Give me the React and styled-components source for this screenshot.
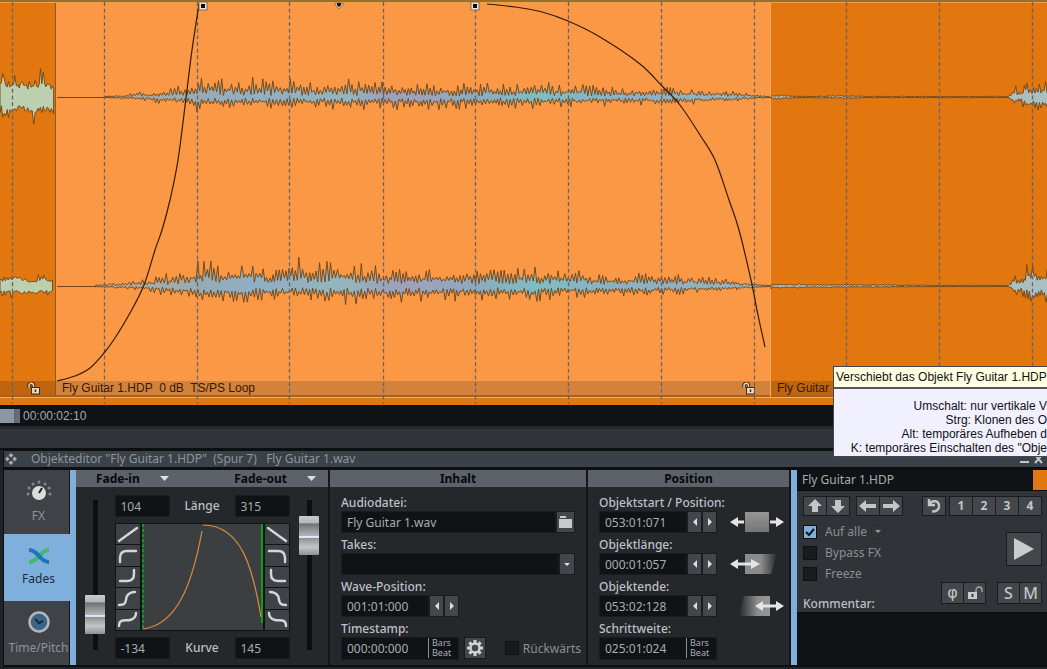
import React from "react";
import styled, { createGlobalStyle, css } from "styled-components";

const GlobalStyle = createGlobalStyle`
    *{
        box-sizing: border-box;
    }
    body{
        margin: 0;
        background: #1f2226;
        font-family: "Noto Sans", "Open Sans", sans-serif;
        font-size: 12px;
        color: #a9acaf;
        overflow-x: hidden;
    }
    button, input, select, textarea{
        font: inherit;
        color: inherit;
        margin: 0;
        padding: 0;
        border: none;
        border-radius: 0;
    }
    svg{
        display: block;
    }
`;

// Wave form helpers

const noise = (seed) => {
  let s = seed * 7919;
  return () => {
    s = (s * 16807) % 2147483647;
    return s / 2147483647;
  };
};

const levelAt = (points, x) => {
  for (let i = 1; i < points.length; i++) {
    if (x <= points[i][0]) {
      const [x0, y0] = points[i - 1];
      const [x1, y1] = points[i];
      return y0 + ((y1 - y0) * (x - x0)) / (x1 - x0);
    }
  }
  return points[points.length - 1][1];
};

const wavePath = ({ mid, up, down, seed, body = 0.08, step = 1.7 }) => {
  const rand = noise(seed);
  const tall = () => (rand() < 0.22 ? 0.85 + 0.25 * rand() : 0.4 + 0.4 * rand());
  const low = () => body + 0.28 * rand();
  const start = up[0][0];
  const end = up[up.length - 1][0];
  const top = [];
  const bottom = [];
  for (let x = start, i = 0; x <= end; x += step * (0.8 + 0.4 * rand()), i++) {
    const peak = i % 2 ? tall() : low();
    const dip = i % 2 ? low() : tall();
    top.push(`${x.toFixed(1)} ${(mid - levelAt(up, x) * peak).toFixed(1)}`);
    bottom.unshift(`${x.toFixed(1)} ${(mid + levelAt(down, x) * dip).toFixed(1)}`);
  }
  return `M${top.concat(bottom).join("L")}Z`;
};

const smooth = (p) => {
  let d = `M${p[0][0]} ${p[0][1]}`;
  for (let i = 0; i < p.length - 1; i++) {
    const a = p[i - 1] || p[i];
    const b = p[i];
    const c = p[i + 1];
    const e = p[i + 2] || c;
    d += `C${b[0] + (c[0] - a[0]) / 6} ${b[1] + (c[1] - a[1]) / 6} ${c[0] - (e[0] - b[0]) / 6} ${c[1] - (e[1] - b[1]) / 6} ${c[0]} ${c[1]}`;
  }
  return d;
};

const beats = [12, 104, 197, 289, 383, 475, 568, 661, 754, 846, 939, 1032];

const fadeIn = [[57, 381], [75, 376], [90, 368], [104, 353], [115, 338], [130, 313], [144, 285], [155, 250], [162, 230], [170, 200], [178, 160], [186, 98], [192, 50], [199, 4]];
const fadeOut = [[487, 4], [515, 7], [542, 12], [568, 21], [600, 37], [640, 64], [662, 86], [680, 105], [700, 135], [715, 160], [729, 200], [739, 230], [751, 280], [758, 315], [765, 347]];

const waves = [
  {
    fill: "#bccfae", mid: 97, seed: 11, body: 0.45, step: 1.4,
    up: [[0, 20], [3, 36], [6, 22], [12, 26], [18, 16], [22, 28], [28, 14], [36, 16], [41, 30], [46, 18], [54, 20]],
    down: [[0, 18], [8, 26], [14, 26], [20, 16], [33, 26], [40, 16], [54, 24]],
  },
  {
    fill: "#bccfae", mid: 286, seed: 23, body: 0.4, step: 1.4,
    up: [[0, 11], [12, 13], [22, 13], [30, 9], [41, 12], [54, 9]],
    down: [[0, 9], [14, 12], [33, 11], [54, 9]],
  },
  {
    fill: "url(#spectrum)", mid: 97, seed: 37,
    up: [[104, 1], [125, 2], [140, 6], [150, 4], [165, 8], [185, 12], [195, 16], [205, 21], [220, 17], [237, 18], [254, 20], [270, 17], [297, 21], [310, 15], [336, 17], [369, 17], [390, 13], [430, 12], [460, 13], [500, 13], [537, 14], [578, 14], [600, 10], [640, 9], [680, 9], [710, 7], [740, 5], [755, 2], [770, 1]],
    down: [[104, 1], [140, 3], [165, 7], [185, 9], [200, 15], [215, 12], [260, 12], [300, 11], [347, 13], [390, 12], [430, 12], [480, 11], [530, 12], [570, 10], [620, 9], [660, 9], [700, 7], [740, 4], [755, 2], [770, 1]],
  },
  {
    fill: "url(#spectrum)", mid: 286, seed: 51, body: 0.12,
    up: [[95, 1], [125, 4], [150, 7], [165, 11], [185, 19], [195, 22], [205, 26], [220, 20], [237, 22], [254, 26], [270, 20], [297, 28], [310, 20], [336, 24], [353, 22], [369, 22], [390, 16], [430, 16], [460, 17], [500, 16], [537, 18], [578, 17], [600, 12], [640, 12], [680, 12], [710, 9], [740, 5], [755, 3], [770, 1]],
    down: [[95, 1], [140, 4], [165, 9], [185, 12], [200, 19], [215, 16], [260, 15], [300, 14], [347, 18], [390, 16], [430, 15], [480, 13], [530, 15], [570, 12], [620, 10], [660, 10], [700, 7], [740, 4], [755, 2], [770, 1]],
  },
  {
    fill: "#a9bfc0", mid: 97, seed: 67, body: 0.2, step: 1.5,
    up: [[771, 2], [776, 3], [800, 1], [846, 2], [870, 1], [1008, 1], [1012, 5], [1015, 11], [1020, 6], [1028, 19], [1032, 15], [1038, 20], [1042, 14], [1050, 18]],
    down: [[771, 2], [776, 3], [800, 1], [846, 2], [870, 1], [1008, 1], [1012, 5], [1015, 12], [1020, 6], [1028, 16], [1038, 17], [1050, 12]],
  },
  {
    fill: "#a9bfc0", mid: 286, seed: 79, body: 0.2, step: 1.5,
    up: [[771, 3], [830, 2], [870, 2], [930, 1], [1008, 1], [1012, 5], [1015, 14], [1020, 8], [1028, 24], [1032, 18], [1038, 25], [1042, 18], [1050, 20]],
    down: [[771, 3], [830, 2], [870, 2], [930, 1], [1008, 1], [1012, 5], [1015, 15], [1020, 8], [1028, 20], [1038, 21], [1050, 15]],
  },
];

// Arranger

const Page = styled.main`
    position: relative;
    min-height: 100vh;
    display: flex;
    flex-direction: column;
    overflow: hidden;
`;

const Arranger = styled.section`
    position: relative;
    height: 405px;
    display: flex;
    flex-direction: column;
    padding-bottom: 7px;
    background: #e1770e;
    border-top: 2px solid #98702c;
    font-family: "Liberation Sans", Arial, sans-serif;
`;

const Lane = styled.div`
    flex: 1;
    display: flex;
    border-top: 1px solid #f0a040;
    border-bottom: 1px solid #f5ad5c;
`;

const Clip = styled.article`
    display: flex;
    flex-direction: column;
    justify-content: flex-end;
    flex: ${(props) => (props.$width ? `0 0 ${props.$width}px` : "1")};
    background: ${(props) => (props.$selected ? "#fb9845" : "#e1770e")};
    border-right: ${(props) => (props.$width ? "1px solid" : "none")};
    border-color: ${(props) => (props.$selected ? "#fcab52" : "#8c5c1d")};
`;

const ClipBar = styled.footer`
    height: 16px;
    display: flex;
    align-items: center;
    justify-content: space-between;
    padding: 0 14px 0 6px;
    border-bottom: 2px solid #a5611f;
    background: ${(props) => (props.$selected ? "#d3823c" : "#be650e")};
    color: #33190a;
    white-space: pre;
    overflow: hidden;
    span{
        position: relative;
        z-index: 1;
    }
    svg{
        margin-left: auto;
    }
`;

const Drawing = styled.svg`
    position: absolute;
    top: -2px;
    left: 0;
    width: 100%;
    height: 405px;
    pointer-events: none;
`;

const Scrub = styled.div`
    height: 21px;
    display: flex;
    align-items: center;
    gap: 3px;
    background: #101316;
    font-family: "Liberation Sans", Arial, sans-serif;
    color: #a5a8aa;
    i{
        width: 20px;
        height: 14px;
        background: #8d96a5;
        border-right: 6px solid #646c78;
    }
`;

const Divider = styled.div`
    height: 22px;
    background: #303337;
    border-top: 3px solid #23262b;
`;

// Tooltip

const Tooltip = styled.aside`
    position: absolute;
    z-index: 2;
    top: 366px;
    left: 833px;
    right: 0;
    border: 1px solid #45454f;
    border-right: none;
    background: #f0f0ff;
    color: #111;
    font-family: "Liberation Sans", Arial, sans-serif;
    white-space: nowrap;
    overflow: hidden;
    h2{
        margin: 0;
        height: 22px;
        padding-left: 2px;
        background: #ffffe1;
        border-bottom: 2px solid #55555a;
        font-size: 12px;
        font-weight: normal;
        line-height: 20px;
    }
    p{
        margin: 0;
        text-align: right;
        line-height: 14px;
    }
`;

const TooltipBody = styled.div`
    padding: 10px 0 1px;
`;

// Object editor

const Editor = styled.section`
    border-top: 2px solid #0c0e10;
    padding-left: 3px;
`;

const TitleBar = styled.header`
    height: 20px;
    display: flex;
    align-items: center;
    gap: 14px;
    padding: 0 4px 0 1px;
    background: #3a4148;
    border: 1px solid #0c0e10;
    border-right: none;
    border-bottom-width: 3px;
    color: #8f959b;
    white-space: pre;
    h1{
        flex: 1;
        margin: 0;
        font-size: 12px;
        font-weight: normal;
        line-height: 16px;
    }
`;

const Panels = styled.div`
    display: grid;
    grid-template-columns: 72px 254fr 258fr 203fr 256fr;
    height: 197px;
    border-left: 1px solid #0c0e10;
    border-bottom: 2px solid #0c0e10;
`;

const Tabs = styled.nav`
    display: flex;
    flex-direction: column;
    gap: 1px;
    padding-right: 6px;
    background: #7fb0dc;
`;

const Tab = styled.button`
    flex: 1 1 0;
    min-height: 0;
    display: flex;
    flex-direction: column;
    align-items: center;
    justify-content: center;
    gap: 6px;
    padding-left: 4px;
    overflow: hidden;
    white-space: nowrap;
    background: ${(props) => (props.$active ? "#7fb0dc" : "#3f4347")};
    color: ${(props) => (props.$active ? "#1b2b3c" : "#8f9398")};
    border-right: 1px solid ${(props) => (props.$active ? "#7fb0dc" : "#14171a")};
    line-height: 16px;
`;

const Panel = styled.section`
    min-width: 0;
    background: #25282b;
    border-right: 2px solid #14171a;
`;

const Band = styled.h2`
    display: flex;
    justify-content: ${(props) => (props.$split ? "space-between" : "center")};
    align-items: center;
    height: 17px;
    margin: 0;
    padding: ${(props) => (props.$split ? "0 12px 0 20px" : "0")};
    background: #5c616a;
    color: #07090b;
    font-size: 12px;
    font-weight: 700;
    span{
        display: flex;
        align-items: center;
        gap: 20px;
    }
`;

const FadeBody = styled.div`
    display: flex;
    justify-content: space-between;
    padding: 8px 9px 0;
`;

const Fader = styled.input`
    appearance: none;
    writing-mode: vertical-lr;
    direction: rtl;
    width: 20px;
    height: 150px;
    margin-top: 5px;
    background: linear-gradient(#0c0e10, #0c0e10) center / 5px 100% no-repeat;
    &::-webkit-slider-thumb{
        appearance: none;
        width: 20px;
        height: 39px;
        border-radius: 1px;
        background: linear-gradient(#c9cbcd 0, #b4b6b8 18%, #6f7275 20%, #b0b2b4 50%, #dfe8ff 51%, #dfe8ff 55%, #8f9193 57%, #b9bbbd 75%, #c2c4c6 80%, #8f9193 100%);
    }
`;

const FadeCenter = styled.div`
    display: flex;
    flex-direction: column;
    gap: 6px;
    width: 175px;
`;

const ValueRow = styled.div`
    display: flex;
    align-items: center;
    justify-content: space-between;
`;

const CurveBox = styled.div`
    display: flex;
    height: 108px;
    border: 1px solid #111417;
`;

const CurveButtons = styled.div`
    width: 26px;
    display: grid;
    gap: 1px;
    background: #111417;
    border: solid #111417;
    border-width: ${(props) => (props.$right ? "0 0 0 2px" : "0 2px 0 0")};
    button{
        display: grid;
        place-items: center;
        min-height: 0;
        background: #3f4246;
    }
`;

const Graph = styled.svg`
    flex: 1;
    min-width: 0;
    height: 100%;
    background: #3c3f41;
`;

const Label = styled.label`
    display: block;
    color: #bfbfc8;
    font-weight: 500;
    line-height: 16px;
    white-space: nowrap;
`;

const Input = styled.input`
    width: ${(props) => (props.$width ? `${props.$width}px` : "100%")};
    height: 22px;
    padding-left: 5px;
    background: #101316;
    border: 1px solid #1a1d20;
    outline: none;
`;

const FieldList = styled.div`
    display: grid;
    gap: 4px;
    padding: 8px 11px 0;
`;

const FieldRow = styled.div`
    display: flex;
    align-items: center;
    height: 22px;
    > svg, > label{
        margin-right: -6px;
    }
`;

const Select = styled.select`
    appearance: none;
    flex: 1;
    height: 22px;
    background: #101316;
    border: 1px solid #1a1d20;
`;

const cell = css`
    display: grid;
    place-items: center;
    background: #43464a;
    color: #c6c8ca;
    border: 1px solid #191c1f;
`;

const Step = styled.button`
    ${cell}
    flex: none;
    width: ${(props) => props.$width || 15}px;
    height: 22px;
    margin-left: ${(props) => props.$gap || 0}px;
`;

const Caret = styled.span`
    ${cell}
    width: 16px;
    height: 22px;
`;

const BeatField = styled.div`
    display: flex;
    align-items: center;
    width: 118px;
    height: 23px;
    flex: none;
    background: #101316;
    border: 1px solid #1a1d20;
`;

const BeatInput = styled(Input)`
    height: 20px;
    background: none;
    border: none;
    padding-left: 5px;
`;

const Unit = styled.span`
    padding-left: 3px;
    border-left: 1px solid #8b8e91;
    font-size: 9px;
    line-height: 10px;
    span{
        display: block;
        height: 10px;
    }
`;

const Check = styled.label`
    display: flex;
    align-items: center;
    gap: ${(props) => props.$gap || 4}px;
    height: 21px;
    color: #8b8f93;
    white-space: nowrap;
    input{
        appearance: none;
        flex: none;
        width: 14px;
        height: 14px;
        background: #191c1f;
        border: 1px solid #0e1012;
    }
    input:checked{
        background: #7fb0dc url("data:image/svg+xml,%3Csvg xmlns='http://www.w3.org/2000/svg' viewBox='0 0 12 12'%3E%3Cpath d='M2 6l3 3 5-6' fill='none' stroke='%23101316' stroke-width='2'/%3E%3C/svg%3E");
    }
`;

const Spacer = styled.div`
    flex: ${(props) => props.$grow || 1};
`;

const ObjectPanel = styled.section`
    display: flex;
    flex-direction: column;
    min-width: 0;
    background: #303337;
    border-left: 6px solid #7fb0dc;
`;

const ObjectName = styled.h2`
    display: flex;
    justify-content: space-between;
    margin: 0;
    padding-left: 5px;
    height: 21px;
    flex: none;
    background: #101316;
    border-bottom: 1px solid #0a0c0e;
    font-size: 12px;
    font-weight: normal;
    line-height: 20px;
    i{
        width: 14px;
        background: #e1770e;
    }
`;

const ToolRow = styled.div`
    display: flex;
    gap: ${(props) => props.$gap || 0}px;
    padding: ${(props) => (props.$padded ? "5px 5px 5px 6px" : "0")};
`;

const Group = styled.div`
    display: flex;
    background: #191c1f;
    border: 1px solid #191c1f;
    gap: 1px;
`;

const Tool = styled.button`
    display: grid;
    place-items: center;
    width: ${(props) => (props.$big ? 34 : props.$wide ? 21 : 22)}px;
    height: ${(props) => (props.$big ? 32 : props.$wide ? 20 : 18)}px;
    background: #43464a;
    color: #c3c5c7;
    font-size: ${(props) => (props.$wide ? 16 : 12)}px;
    font-weight: ${(props) => (props.$wide ? 500 : 700)};
    line-height: 18px;
`;

const PhaseTool = styled(Tool)`
    font-family: "DejaVu Sans", sans-serif;
`;

const Dropdown = styled.button`
    align-self: center;
    display: grid;
    place-items: center;
    width: 14px;
    height: 14px;
    background: #303337;
    border: 1px solid #26292c;
    opacity: 0.6;
`;

const Options = styled.div`
    display: flex;
    justify-content: space-between;
    height: 91px;
    padding: 0 5px 0 6px;
`;

const Checks = styled.div`
    display: flex;
    flex-direction: column;
    > label:last-child{
        margin-top: auto;
    }
`;

const Actions = styled.div`
    display: flex;
    flex-direction: column;
    align-items: flex-end;
    justify-content: space-between;
    padding: 11px 0 8px;
`;

const Comment = styled.textarea`
    flex: 1;
    min-height: 0;
    resize: none;
    outline: none;
    background: #101316;
    border-top: 1px solid #0a0c0e;
`;

// Icons

const Lock = () => (
  <svg width="14" height="13" viewBox="0 0 14 13" fill="none">
    <path d="M2 6V3.5a2 2 0 0 1 4.500 0V7" stroke="#4a2a0c" strokeWidth="3.400" />
    <path d="M2 6V3.500a2 2 0 0 1 4.500 0V7" stroke="#e8d8c4" strokeWidth="1.400" />
    <rect x="4.500" y="5.500" width="8" height="6.500" fill="#e8d8c4" stroke="#4a2a0c" />
    <path d="M8.500 7.500v2.500" stroke="#4a2a0c" strokeWidth="1.500" />
  </svg>
);

const Triangle = ({ d = "M0 0h9L4.500 5z", w = 9, h = 5 }) => (
  <svg width={w} height={h} viewBox={`0 0 ${w} ${h}`} fill="#dcdee0"><path d={d} /></svg>
);

const Arrow = ({ turn = 0 }) => (
  <svg width="18" height="14" viewBox="-9 -7 18 14" fill="#c3c5c7">
    <path transform={`rotate(${turn})`} d={turn % 180 ? "M7 0L0-7v4h-6v6H0v4z" : "M9 0L2-6v4h-10v4H2v4z"} />
  </svg>
);

const Steps = ({ name }) => (
  <>
    <Step type="button" aria-label={`${name} zurück`}><Triangle d="M4 0v8L0 4z" w={4} h={8} /></Step>
    <Step type="button" aria-label={`${name} vor`}><Triangle d="M0 0v8l4-4z" w={4} h={8} /></Step>
  </>
);

const curves = ["M3 16L21 3", "M4 16V12q0-7 7-7h9", "M4 14h7q7 0 7-7V3", "M3 16c9 0 6-6 8-9s4-4 8-4", "M3 16c0-8 7-5 11-6s6-3 6-7"];

const Shapes = ({ right }) => (
  <CurveButtons $right={right}>
    {curves.map((d, i) => (
      <button type="button" key={d} aria-label={`${right ? "Fade-out" : "Fade-in"} Kurve ${i + 1}`}>
        <svg width="24" height="19" viewBox="0 0 24 19" fill="none">
          <path d={d} transform={right ? "matrix(-1 0 0 1 24 0)" : undefined} stroke="#d4d6d9" strokeWidth="2.400" strokeLinecap="round" />
        </svg>
      </button>
    ))}
  </CurveButtons>
);

const MoveIcon = ({ kind }) => (
  <svg width="54" height="22" viewBox="0 0 54 22">
    {kind === "move" && <rect x="15" y="1" width="24" height="20" fill="url(#metal)" />}
    {kind === "length" && <path d="M15 1h32l-6 20H15z" fill="url(#fadeRight)" />}
    {kind === "end" && <path d="M14 1h26v20H9z" fill="url(#fadeLeft)" />}
    <g fill="#e4e4e4">
      {kind === "move" && (
        <path d="M0 11l8-5v3.500h6v3H8V16zM54 11l-8-5v3.500h-6v3h6V16z" />
      )}
      {kind === "length" && <path d="M0 11l8-5v3.500h13V6l9 5-9 5v-3.500H8V16z" />}
      {kind === "end" && <path d="M25 11l8-5v3.500h13V6l8 5-8 5v-3.500H33V16z" />}
    </g>
  </svg>
);

const Handle = ({ x }) => (
  <g>
    <rect x={x - 4} y="2" width="8" height="8" fill="#e8e0d4" stroke="#6b5a45" strokeWidth="0.800" />
    <rect x={x - 2} y="4" width="4" height="4" fill="#0b0b0b" />
  </g>
);

const Timeline = () => (
  <Drawing aria-hidden="true">
    <defs>
      <linearGradient id="spectrum" gradientUnits="userSpaceOnUse" x1="104" y1="0" x2="770" y2="0">
        <stop offset="0" stopColor="#b5aa9a" />
        <stop offset="0.150" stopColor="#96abb6" />
        <stop offset="0.220" stopColor="#8fafc4" />
        <stop offset="0.370" stopColor="#94b4bc" />
        <stop offset="0.420" stopColor="#9ca2bc" />
        <stop offset="0.490" stopColor="#9ba4bc" />
        <stop offset="0.560" stopColor="#8cabbe" />
        <stop offset="0.650" stopColor="#80bcc2" />
        <stop offset="0.780" stopColor="#8cb0c2" />
        <stop offset="1" stopColor="#96b4c0" />
      </linearGradient>
      <linearGradient id="metal" x1="0" y1="0" x2="0" y2="1">
        <stop offset="0" stopColor="#969696" />
        <stop offset="1" stopColor="#757575" />
      </linearGradient>
      <linearGradient id="fadeRight">
        <stop offset="0" stopColor="#8c8c8c" />
        <stop offset="0.500" stopColor="#8c8c8c" />
        <stop offset="1" stopColor="#25282b" />
      </linearGradient>
      <linearGradient id="fadeLeft">
        <stop offset="0" stopColor="#25282b" />
        <stop offset="0.600" stopColor="#8c8c8c" />
        <stop offset="1" stopColor="#969696" />
      </linearGradient>
    </defs>
    {[97, 286].map((y) => (
      <path key={y} d={`M57 ${y}.5H1020`} stroke="#7c450f" />
    ))}
    {waves.map((wave) => (
      <path key={wave.seed} d={wavePath(wave)} fill={wave.fill} stroke="#6f4312" strokeWidth="0.900" />
    ))}
    {beats.map((x) => (
      <path key={x} d={`M${x}.5 2V404`} stroke="#66646a" strokeWidth="1.300" strokeDasharray="4 2.670" />
    ))}
    <path d={smooth(fadeIn)} fill="none" stroke="#351c05" strokeWidth="1.200" />
    <path d={smooth(fadeOut)} fill="none" stroke="#351c05" strokeWidth="1.200" />
    <Handle x={203} />
    <Handle x={475} />
    <path d="M335 3h8v2l-4 4-4-4z" fill="#cdbca6" stroke="#8a6a48" strokeWidth="0.800" />
    <path d="M337 3h4v2l-2 2-2-2z" fill="#1a120a" />
  </Drawing>
);

const BarsBeat = ({ id, value }) => (
  <BeatField>
    <BeatInput id={id} defaultValue={value} $width={86} />
    <Unit><span>Bars</span><span>Beat</span></Unit>
  </BeatField>
);

const PositionField = ({ id, name, value, kind }) => (
  <div>
    <Label htmlFor={id}>{name}</Label>
    <FieldRow>
      <Input id={id} defaultValue={value} $width={88} />
      <Steps name={name} />
      <Spacer />
      <MoveIcon kind={kind} />
    </FieldRow>
  </div>
);

const App = () => {
  return (
    <Page>
      <GlobalStyle />
      <Arranger>
        <Lane>
          <Clip $width={56}>
            <ClipBar><Lock /></ClipBar>
          </Clip>
          <Clip $width={715} $selected>
            <ClipBar $selected>
              <span>Fly Guitar 1.HDP  0 dB  TS/PS Loop</span>
              <Lock />
            </ClipBar>
          </Clip>
          <Clip>
            <ClipBar><span>Fly Guitar</span></ClipBar>
          </Clip>
        </Lane>
        <Timeline />
      </Arranger>
      <Scrub><i /><span>00:00:02:10</span></Scrub>
      <Divider />

      <Editor>
        <TitleBar>
          <svg width="12" height="12" viewBox="0 0 12 12" fill="#a6abb0">
            <path d="M6 0l2.500 2.500L6 4.500 3.500 2.500zM6 12l2.500-2.500L6 7.500 3.500 9.500zM0 6l2.500-2.500L4.500 6 2.500 8.500zM12 6L9.500 3.500 7.500 6l2 2.500z" />
          </svg>
          <h1>{'Objekteditor "Fly Guitar 1.HDP"  (Spur 7)   Fly Guitar 1.wav'}</h1>
          <svg width="24" height="10" viewBox="0 0 24 10" fill="none" stroke="#c3c5c7" strokeWidth="2">
            <path d="M1 8h9M16 1l7 8M23 1l-7 8" />
          </svg>
        </TitleBar>

        <Panels>
          <Tabs>
            <Tab type="button">
              <svg width="28" height="22" viewBox="0 0 28 22">
                <g fill="#85898d">
                  <circle cx="3" cy="14" r="1.500" /><circle cx="4" cy="8" r="1.500" /><circle cx="8" cy="4" r="1.500" />
                  <circle cx="14" cy="2" r="1.500" /><circle cx="20" cy="4" r="1.500" /><circle cx="24" cy="8" r="1.500" /><circle cx="25" cy="14" r="1.500" />
                </g>
                <circle cx="14" cy="13" r="7" fill="#dcdcdc" />
                <path d="M14 13l3-5" stroke="#222" strokeWidth="2" />
              </svg>
              FX
            </Tab>
            <Tab type="button" $active>
              <svg width="22" height="18" viewBox="0 0 22 18" fill="none" strokeWidth="4">
                <path d="M1 15C11 15 11 3 21 3" stroke="#43b96a" />
                <path d="M1 3C11 3 11 15 21 15" stroke="#1c74bf" />
              </svg>
              Fades
            </Tab>
            <Tab type="button">
              <svg width="24" height="24" viewBox="0 0 24 24">
                <circle cx="12" cy="12" r="9.500" fill="#3b6486" stroke="#b4b7ba" strokeWidth="2.500" />
                <path d="M8 9l4 4 4-2" fill="none" stroke="#17293a" strokeWidth="2" />
              </svg>
              Time/Pitch
            </Tab>
          </Tabs>

          <Panel>
            <Band $split>
              <span>Fade-in <Triangle /></span>
              <span>Fade-out <Triangle /></span>
            </Band>
            <FadeBody>
              <Fader type="range" aria-label="Fade-in" defaultValue="14" />
              <FadeCenter>
                <ValueRow>
                  <Input id="len-in" defaultValue="104" $width={55} />
                  <Label htmlFor="len-in">Länge</Label>
                  <Input aria-label="Länge Fade-out" defaultValue="315" $width={55} />
                </ValueRow>
                <CurveBox>
                  <Shapes />
                  <Graph viewBox="0 0 121 105" preserveAspectRatio="none">
                    <path d="M1 0V105" stroke="#129a1e" strokeWidth="2" strokeDasharray="3 2" />
                    <path d="M120 0V98" stroke="#129a1e" strokeWidth="2" />
                    <path d="M1 104C35 100 50 60 60 7M61 1C100 1 111 45 119 92" fill="none" stroke="#d8893a" strokeWidth="1.200" />
                  </Graph>
                  <Shapes right />
                </CurveBox>
                <ValueRow>
                  <Input id="curve-in" defaultValue="-134" $width={55} />
                  <Label htmlFor="curve-in">Kurve</Label>
                  <Input aria-label="Kurve Fade-out" defaultValue="145" $width={55} />
                </ValueRow>
              </FadeCenter>
              <Fader type="range" aria-label="Fade-out" defaultValue="86" />
            </FadeBody>
          </Panel>

          <Panel>
            <Band>Inhalt</Band>
            <FieldList>
              <div>
                <Label htmlFor="file">Audiodatei:</Label>
                <FieldRow>
                  <Input id="file" defaultValue="Fly Guitar 1.wav" />
                  <Step type="button" $width={19} aria-label="Datei öffnen">
                    <svg width="13" height="12" viewBox="0 0 13 12" fill="#c9c9c9"><path d="M1 0h6v2H1zM0 3h13v9H0z" /></svg>
                  </Step>
                </FieldRow>
              </div>
              <div>
                <Label htmlFor="takes">Takes:</Label>
                <FieldRow>
                  <Select id="takes" />
                  <Caret><Triangle d="M0 0h6L3 3z" w={6} h={3} /></Caret>
                </FieldRow>
              </div>
              <div>
                <Label htmlFor="wavepos">Wave-Position:</Label>
                <FieldRow>
                  <Input id="wavepos" defaultValue="001:01:000" $width={88} />
                  <Steps name="Wave-Position" />
                </FieldRow>
              </div>
              <div>
                <Label htmlFor="stamp">Timestamp:</Label>
                <FieldRow>
                  <BarsBeat id="stamp" value="000:00:000" />
                  <Step type="button" $width={22} $gap={5} aria-label="Einstellungen">
                    <svg width="16" height="16" viewBox="-8 -8 16 16" fill="none" stroke="#d0d2d4">
                      <circle r="4.500" strokeWidth="2.500" />
                      {[0, 45, 90, 135].map((a) => (
                        <path key={a} d="M0-8v3M0 8v-3" strokeWidth="3" transform={`rotate(${a})`} />
                      ))}
                    </svg>
                  </Step>
                  <Spacer />
                  <Check><input type="checkbox" />Rückwärts</Check>
                </FieldRow>
              </div>
            </FieldList>
          </Panel>

          <Panel>
            <Band>Position</Band>
            <FieldList>
              <PositionField id="start" name="Objektstart / Position:" value="053:01:071" kind="move" />
              <PositionField id="length" name="Objektlänge:" value="000:01:057" kind="length" />
              <PositionField id="end" name="Objektende:" value="053:02:128" kind="end" />
              <div>
                <Label htmlFor="grid">Schrittweite:</Label>
                <FieldRow>
                  <BarsBeat id="grid" value="025:01:024" />
                </FieldRow>
              </div>
            </FieldList>
          </Panel>

          <ObjectPanel>
            <ObjectName>Fly Guitar 1.HDP<i /></ObjectName>
            <ToolRow $padded>
              <Group>
                <Tool type="button" aria-label="Hoch"><Arrow turn={-90} /></Tool>
                <Tool type="button" aria-label="Runter"><Arrow turn={90} /></Tool>
              </Group>
              <Spacer $grow={2} />
              <Group>
                <Tool type="button" aria-label="Links"><Arrow turn={180} /></Tool>
                <Tool type="button" aria-label="Rechts"><Arrow /></Tool>
              </Group>
              <Spacer $grow={6} />
              <Group>
                <Tool type="button" aria-label="Rückgängig">
                  <svg width="14" height="14" viewBox="0 0 14 14" fill="none" stroke="#c3c5c7" strokeWidth="2.400">
                    <path d="M2 0v6h6M2.500 5.500C4 1 12 1 12 7c0 4-3 5.500-7 5.500" />
                  </svg>
                </Tool>
              </Group>
              <Spacer />
              <Group>
                {[1, 2, 3, 4].map((n) => (
                  <Tool type="button" key={n}>{n}</Tool>
                ))}
              </Group>
            </ToolRow>
            <Options>
              <Checks>
                <ToolRow $gap={4}>
                  <Check $gap={8}><input type="checkbox" defaultChecked />Auf alle</Check>
                  <Dropdown type="button" aria-label="Auswahl"><Triangle d="M0 0h6L3 3z" w={6} h={3} /></Dropdown>
                </ToolRow>
                <Check $gap={8}><input type="checkbox" />Bypass FX</Check>
                <Check $gap={8}><input type="checkbox" />Freeze</Check>
                <Label htmlFor="comment">Kommentar:</Label>
              </Checks>
              <Actions>
                <Group>
                  <Tool type="button" $big aria-label="Abspielen">
                    <svg width="20" height="22" viewBox="0 0 20 22" fill="#c9cbcd"><path d="M0 0l20 11L0 22z" /></svg>
                  </Tool>
                </Group>
                <ToolRow $gap={11}>
                  <Group>
                    <PhaseTool type="button" $wide>φ</PhaseTool>
                    <Tool type="button" $wide aria-label="Sperren">
                      <svg width="16" height="14" viewBox="0 0 16 14" fill="none">
                        <path d="M9 6V4a3 3 0 0 1 6 0v2" stroke="#a9abad" strokeWidth="1.300" />
                        <path d="M1 6h9v7H1z" fill="#c9cbcd" />
                        <path d="M5.500 8v3" stroke="#33363a" strokeWidth="2" />
                      </svg>
                    </Tool>
                  </Group>
                  <Group>
                    <Tool type="button" $wide>S</Tool>
                    <Tool type="button" $wide>M</Tool>
                  </Group>
                </ToolRow>
              </Actions>
            </Options>
            <Comment id="comment" />
          </ObjectPanel>
        </Panels>
      </Editor>

      <Tooltip role="tooltip">
        <h2>Verschiebt das Objekt Fly Guitar 1.HDP A</h2>
        <TooltipBody>
          <p>Umschalt: nur vertikale V</p>
          <p>Strg: Klonen des O</p>
          <p>Alt: temporäres Aufheben d</p>
          <p>K: temporäres Einschalten des "Obje</p>
        </TooltipBody>
      </Tooltip>
    </Page>
  );
};

export default App;
